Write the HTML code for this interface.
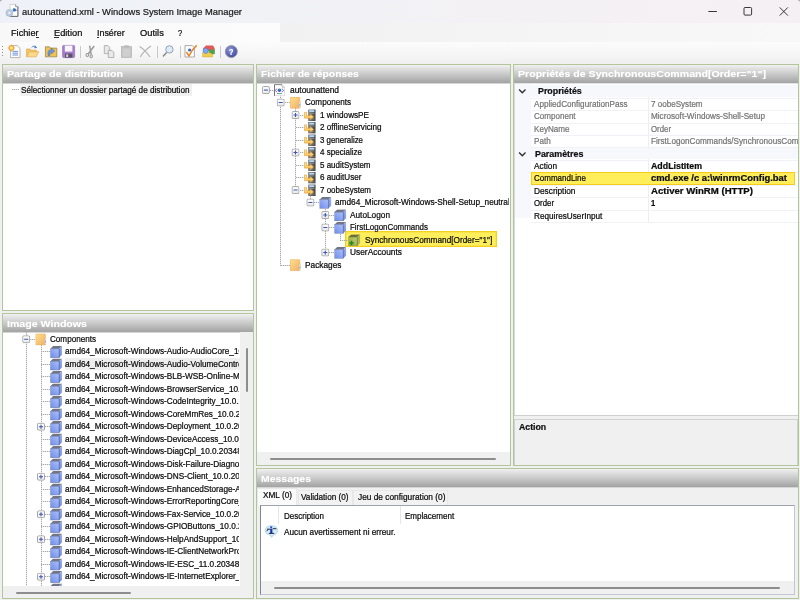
<!DOCTYPE html>
<html lang="fr"><head><meta charset="utf-8"><title>autounattend.xml - Windows System Image Manager</title>
<style>
html,body{margin:0;padding:0;}
body{width:800px;height:600px;overflow:hidden;background:#f0f0f0;position:relative;font-family:"Liberation Sans",sans-serif;}
#app{filter:blur(0.45px);position:absolute;left:0;top:0;width:800px;height:600px;overflow:hidden;}
#app div,#app span,#app svg{position:absolute;}
.t{white-space:pre;transform-origin:0 50%;display:block;-webkit-text-stroke:0.22px currentColor;}
.c{overflow:hidden;}
.b{font-weight:bold;}
</style></head><body><div id="app">

<svg width="0" height="0" style="left:0;top:0"><defs>
<linearGradient id="gcube" x1="0" y1="1" x2="1" y2="0"><stop offset="0" stop-color="#6f8deb"/><stop offset="1" stop-color="#abc0fa"/></linearGradient>
<linearGradient id="gcubeR" x1="0" y1="1" x2="1" y2="0"><stop offset="0" stop-color="#6d86d4"/><stop offset="1" stop-color="#a3b7ef"/></linearGradient>
<linearGradient id="gfold" x1="0" y1="0" x2="1" y2="1"><stop offset="0" stop-color="#fddf8c"/><stop offset="1" stop-color="#f1b163"/></linearGradient>
<linearGradient id="gsrv" x1="0" y1="0" x2="1" y2="0"><stop offset="0" stop-color="#858585"/><stop offset="1" stop-color="#444444"/></linearGradient>
<linearGradient id="garr" x1="0" y1="0" x2="0" y2="1"><stop offset="0" stop-color="#fee9a8"/><stop offset="1" stop-color="#f8bd4c"/></linearGradient>
<linearGradient id="gexp" x1="0" y1="0" x2="0" y2="1"><stop offset="0" stop-color="#ffffff"/><stop offset="1" stop-color="#e9e9e9"/></linearGradient>
<linearGradient id="ggreen" x1="0" y1="1" x2="1" y2="0"><stop offset="0" stop-color="#8fa53e"/><stop offset="1" stop-color="#c3cc74"/></linearGradient>
<radialGradient id="ghelp" cx="0.4" cy="0.35" r="0.7"><stop offset="0" stop-color="#8f9be0"/><stop offset="1" stop-color="#3b4597"/></radialGradient>
<symbol id="cube" viewBox="0 0 12 12">
<polygon points="0.2,2.9 2.9,0.2 12,0.2 8.8,2.9" fill="#737585"/>
<polygon points="8.8,2.9 12,0.2 12,8.8 8.8,11.8" fill="url(#gcubeR)"/>
<path d="M8.8,2.9 V11.8" stroke="#4f5e96" stroke-width="0.7"/>
<rect x="0.3" y="2.9" width="8.5" height="8.8" fill="url(#gcube)" stroke="#5b6a9e" stroke-width="0.5"/>
</symbol>
<symbol id="gcubeS" viewBox="0 0 12 12">
<polygon points="0.2,2.9 2.9,0.2 12,0.2 8.8,2.9" fill="#6c7040"/>
<polygon points="8.8,2.9 12,0.2 12,8.8 8.8,11.8" fill="#a9b75a"/>
<path d="M8.8,2.9 V11.8" stroke="#66722e" stroke-width="0.7"/>
<rect x="0.3" y="2.9" width="8.5" height="8.8" fill="url(#ggreen)" stroke="#6f7c34" stroke-width="0.5"/>
<path d="M1.0,8.8h4.4M3.2,6.6v4.4" stroke="#1f8a1f" stroke-width="1.5" fill="none"/>
</symbol>
<symbol id="folder" viewBox="0 0 11 12">
<rect x="0.3" y="0.4" width="9.6" height="11.2" rx="0.6" fill="url(#gfold)" stroke="#e9a964" stroke-width="0.6"/>
<path d="M9.2,5.6 l1.5,-1 v5.6 l-1.5,1z" fill="#fdfdfd" stroke="#c9a06a" stroke-width="0.4"/>
<path d="M9.5,7.2 l0.9,-0.5 v2.4 l-0.9,0.6z" fill="#7fa6e6"/>
</symbol>
<symbol id="pass" viewBox="0 0 12 12">
<rect x="4.2" y="0.2" width="7.500" height="11.600" fill="url(#gsrv)"/>
<rect x="5.4" y="1" width="5" height="1.900" fill="#b4d8f8"/>
<rect x="5.4" y="3.800" width="5" height="0.700" fill="#969696"/>
<rect x="5.4" y="9.400" width="5" height="0.700" fill="#8a8a8a"/>
<path d="M0.500,3.200 h2.200 v3.300 h3.700 v-1.700 l3.400,2.900 l-3.400,2.900 v-1.700 h-5.900z" fill="url(#garr)" stroke="#e09a26" stroke-width="0.6" stroke-linejoin="round"/>
</symbol>
<symbol id="xmldoc" viewBox="0 0 11 12">
<path d="M0.4,0.4 h7.6 l2.6,2.6 v8.6 h-10.2z" fill="#ffffff" stroke="#b9b9b9" stroke-width="0.5"/>
<path d="M0.4,11.6 v-11.2 h7.6" fill="none" stroke="#4a4a4a" stroke-width="0.8"/>
<path d="M8,0.4 v2.6 h2.6" fill="#f2f2f2" stroke="#8a8a8a" stroke-width="0.5"/>
<path d="M2.9,4.4 l-1.5,1.8 l1.5,1.8 M8,4.4 l1.5,1.8 l-1.5,1.8" fill="none" stroke="#5a58c0" stroke-width="0.9"/>
<circle cx="5.45" cy="6.1" r="1.7" fill="#3a4fd8"/>
<circle cx="5.5" cy="5.5" r="0.8" fill="#3cb060"/>
<rect x="3" y="9" width="5" height="0.8" fill="#4a9a8c"/>
</symbol>
<symbol id="minus" viewBox="0 0 8 8">
<rect x="0.5" y="0.5" width="7" height="7" rx="1.2" fill="url(#gexp)" stroke="#9b9b9b" stroke-width="0.9"/>
<path d="M2,4 h4" stroke="#3b58b2" stroke-width="1.1"/>
</symbol>
<symbol id="plus" viewBox="0 0 8 8">
<rect x="0.5" y="0.5" width="7" height="7" rx="1.2" fill="url(#gexp)" stroke="#9b9b9b" stroke-width="0.9"/>
<path d="M2,4 h4 M4,2 v4" stroke="#3b58b2" stroke-width="1.1"/>
</symbol>
</defs></svg>
<div style="left:0px;top:0px;width:800px;height:23px;background:linear-gradient(90deg,#eef2f8 0%,#f1f2f6 35%,#f4f1f4 70%,#f5f0f3 100%);"></div>
<div style="left:0px;top:23px;width:280px;height:19px;background:linear-gradient(90deg,#f8f8f8,#fcfcfc);"></div>
<div style="left:280px;top:23px;width:520px;height:19px;background:linear-gradient(90deg,#f1f1f1,#f8f8f8);"></div>
<div style="left:0px;top:42px;width:800px;height:21px;background:linear-gradient(#fcfcfc,#f7f7f7 50%,#f0f0f0);"></div>
<svg style="left:4px;top:3px" width="16" height="16" viewBox="4 3 16 16">
<path d="M10,4.400 h5.600 l2.300,2.300 v9.700 h-7.900z" fill="#ffffff" stroke="#b5b5b5" stroke-width="0.600"/>
<path d="M17.900,6.700 v9.700 h-7.900" fill="none" stroke="#5a5a5a" stroke-width="0.900"/>
<path d="M15.600,4.400 v2.300 h2.300" fill="#e8e8e8" stroke="#6a6a6a" stroke-width="0.600"/>
<circle cx="14.300" cy="9.900" r="1.700" fill="#2f55d0"/><circle cx="13.700" cy="9.300" r="0.900" fill="#35b05a"/>
<path d="M15.800,10.200 h1.400" stroke="#5a62c8" stroke-width="0.800"/>
<circle cx="9.400" cy="12.900" r="3.500" fill="#bccbdc" stroke="#9fb2c8" stroke-width="0.600"/><circle cx="9.400" cy="12.900" r="1.150" fill="#f1f4f8"/>
</svg>
<svg style="left:700px;top:0" width="100" height="23" viewBox="0 0 100 23">
<path d="M8.3,11.5 h8.6" stroke="#222" stroke-width="0.9"/>
<rect x="44" y="7.5" width="7.6" height="7.6" rx="1" fill="none" stroke="#222" stroke-width="0.9"/>
<path d="M79.7,7.4 l8.2,8.2 M87.9,7.4 l-8.2,8.2" stroke="#222" stroke-width="0.9"/>
</svg>
<div style="left:35.5px;top:37px;width:3px;height:1px;background:#333;"></div>
<div style="left:53.6px;top:37px;width:5px;height:1px;background:#333;"></div>
<div style="left:96.8px;top:37px;width:2px;height:1px;background:#333;"></div>
<div style="left:2px;top:46px;width:1px;height:1px;background:#8e8e8e;"></div>
<div style="left:2px;top:49px;width:1px;height:1px;background:#8e8e8e;"></div>
<div style="left:2px;top:52px;width:1px;height:1px;background:#8e8e8e;"></div>
<div style="left:2px;top:55px;width:1px;height:1px;background:#8e8e8e;"></div>
<div style="left:80px;top:46px;width:1px;height:12px;background:#c9c9c9;"></div>
<div style="left:157px;top:46px;width:1px;height:12px;background:#c9c9c9;"></div>
<div style="left:180px;top:46px;width:1px;height:12px;background:#c9c9c9;"></div>
<div style="left:220px;top:46px;width:1px;height:12px;background:#c9c9c9;"></div>
<svg style="left:0;top:42px" width="250" height="20" viewBox="0 42 250 20">
<!-- new -->
<path d="M10.6,45.6 h6.6 l2.8,2.8 v9.2 h-9.4z" fill="#fdfdfd" stroke="#9a9a9a" stroke-width="0.7"/>
<path d="M12.5,51.4h5.6M12.5,53.2h5.6M12.5,55h5.6" stroke="#5d84d6" stroke-width="0.9"/>
<circle cx="11.4" cy="48" r="2.5" fill="#fbc64c" stroke="#ef9a2a" stroke-width="0.8"/>
<path d="M11.4,44.4v7.2M7.8,48h7.2M8.9,45.5l5,5M13.9,45.5l-5,5" stroke="#f3a030" stroke-width="0.6"/>
<circle cx="11.4" cy="48" r="1.4" fill="#fde9a0"/>
<!-- open -->
<path d="M26.6,56.6 v-7.6 h3.4 l1,1.2 h5.4 v1.6" fill="#f6c766" stroke="#d89a3c" stroke-width="0.6"/>
<path d="M26.6,56.8 l2.6,-5 h9.6 l-2.6,5z" fill="#fbd98a" stroke="#dba041" stroke-width="0.6"/>
<path d="M31.6,47.6 c1.4,-2 3.6,-2 4.8,-0.2" fill="none" stroke="#4a78c8" stroke-width="0.9"/>
<path d="M35.2,45.6 l1.8,2.4 l-2.8,0.2z" fill="#4a78c8"/>
<!-- folder arrow -->
<path d="M45.4,56.8 v-10 h4 l1,1.3 h6.4 v8.7z" fill="#f4c34f" stroke="#8a7a52" stroke-width="0.7"/>
<path d="M48,55.4 v-3 c0,-1.8 1.4,-2.6 3.2,-2.6 v-1.6 l3.6,2.8 l-3.6,2.8 v-1.6 c-0.8,0 -1.2,0.2 -1.2,1 v2.2z" fill="#6f98de" stroke="#3f67b1" stroke-width="0.5"/>
<!-- save -->
<rect x="62.6" y="45.4" width="12" height="12.2" rx="1" fill="#a77ccb" stroke="#8a5fb4" stroke-width="0.6"/>
<rect x="64.8" y="45.6" width="7.6" height="6" fill="#f7f4fb"/>
<rect x="65" y="53.6" width="7.4" height="4" fill="#5a5361"/>
<rect x="66.2" y="54.4" width="2" height="2.6" fill="#d8d2e0"/>
<!-- cut (disabled) -->
<path d="M89.600,45.600 l1.600,9 M94.200,46 l-6.200,8.200" stroke="#9a9a9a" stroke-width="1.500" fill="none"/>
<ellipse cx="87.300" cy="55" rx="1.300" ry="1.500" fill="none" stroke="#9a9a9a" stroke-width="1.100"/>
<ellipse cx="91.200" cy="56.200" rx="1.200" ry="1.500" fill="none" stroke="#9a9a9a" stroke-width="1.100"/>
<!-- copy -->
<path d="M104.300,45.600 h3.600 l1.800,1.800 v6.200 h-5.400z" fill="#e9e9e9" stroke="#a4a4a4" stroke-width="0.800"/>
<path d="M108.300,50.400 h3.700 l1.800,1.800 v5.300 h-5.500z" fill="#e9e9e9" stroke="#a4a4a4" stroke-width="0.800"/>
<!-- paste -->
<rect x="121.4" y="46.6" width="10.2" height="11" fill="#c4c4c4" stroke="#b0b0b0" stroke-width="0.6"/>
<rect x="124.2" y="45.4" width="4.6" height="2" fill="#b7b7b7"/>
<rect x="122.8" y="48.6" width="7.4" height="8" fill="#cfcfcf"/>
<!-- delete -->
<path d="M139.6,46.4 c4,2.4 7.4,6 10.4,10.6 M151,46 c-4.4,3 -8.4,6.6 -10.6,11" stroke="#b4b4b4" stroke-width="1.2" fill="none"/>
<!-- find -->
<circle cx="169.4" cy="49.4" r="3.7" fill="#dcebfa" stroke="#8d99ab" stroke-width="0.9"/>
<path d="M166.6,52.4 l-3.6,4.2" stroke="#8a8a8a" stroke-width="1.5"/>
<!-- validate -->
<path d="M185,45.6 h7.4 l2,2 v9.4 h-9.4z" fill="#fdfdfd" stroke="#8b8b8b" stroke-width="0.7"/>
<circle cx="189.6" cy="50" r="1.6" fill="#3a66c8"/>
<path d="M186.4,52 l2.6,4 c2,-4.4 4.4,-7.6 7.6,-10.6" fill="none" stroke="#e8862c" stroke-width="1.5"/>
<!-- config set -->
<path d="M203,48.6 l3,-3 h7 l1.6,2.4 v3 h-11.6z" fill="#e05a5a"/>
<rect x="208.6" y="49.6" width="6.2" height="4.6" fill="#4fa24a"/>
<path d="M202.6,52.6 h7 l3,2 v2.4 h-10z" fill="#f2cd4a" stroke="#b89c3a" stroke-width="0.4"/>
<circle cx="205.6" cy="50.8" r="2.6" fill="#7eaaf0" stroke="#4d74c8" stroke-width="0.5"/>
<!-- help -->
<circle cx="231.3" cy="51.6" r="6" fill="url(#ghelp)" stroke="#9a9aa6" stroke-width="1"/>
</svg>
<div style="left:2px;top:64px;width:252px;height:247px;box-sizing:border-box;border:1px solid #b3c59b;background:#ffffff;"></div>
<div style="left:3px;top:65px;width:250px;height:18px;background:linear-gradient(#f1f1f1 0%,#e2e2e2 18%,#c6c6c6 55%,#a3a3a3 100%);"></div>
<div style="left:3px;top:83px;width:250px;height:1px;background:#d6d6d6;"></div>
<div style="left:2px;top:313px;width:252px;height:286px;box-sizing:border-box;border:1px solid #b3c59b;background:#ffffff;"></div>
<div style="left:3px;top:314px;width:250px;height:18px;background:linear-gradient(#f1f1f1 0%,#e2e2e2 18%,#c6c6c6 55%,#a3a3a3 100%);"></div>
<div style="left:3px;top:332px;width:250px;height:1px;background:#d6d6d6;"></div>
<div style="left:256px;top:64px;width:255px;height:402px;box-sizing:border-box;border:1px solid #b3c59b;background:#ffffff;"></div>
<div style="left:257px;top:65px;width:253px;height:18px;background:linear-gradient(#f1f1f1 0%,#e2e2e2 18%,#c6c6c6 55%,#a3a3a3 100%);"></div>
<div style="left:257px;top:83px;width:253px;height:1px;background:#d6d6d6;"></div>
<div style="left:513px;top:64px;width:286px;height:402px;box-sizing:border-box;border:1px solid #b3c59b;background:#ffffff;"></div>
<div style="left:514px;top:65px;width:284px;height:18px;background:linear-gradient(#f1f1f1 0%,#e2e2e2 18%,#c6c6c6 55%,#a3a3a3 100%);"></div>
<div style="left:514px;top:83px;width:284px;height:1px;background:#d6d6d6;"></div>
<div style="left:256px;top:468px;width:543px;height:131px;box-sizing:border-box;border:1px solid #b3c59b;background:#f0f0f0;"></div>
<div style="left:257px;top:469px;width:541px;height:18px;background:linear-gradient(#f1f1f1 0%,#e2e2e2 18%,#c6c6c6 55%,#a3a3a3 100%);"></div>
<div style="left:257px;top:487px;width:541px;height:1px;background:#d6d6d6;"></div>
<div style="left:12px;top:89px;width:7px;height:1px;background:repeating-linear-gradient(90deg,#a9a9a9 0 1px,rgba(169,169,169,.3) 1px 2px);"></div>
<div style="left:20px;top:84px;width:172px;height:12px;background:#f0f0f0;"></div>
<div style="left:280px;top:95px;width:1px;height:171px;background:repeating-linear-gradient(180deg,#a9a9a9 0 1px,rgba(169,169,169,.3) 1px 2px);"></div>
<div style="left:295px;top:108px;width:1px;height:82px;background:repeating-linear-gradient(180deg,#a9a9a9 0 1px,rgba(169,169,169,.3) 1px 2px);"></div>
<div style="left:310px;top:196px;width:1px;height:7px;background:repeating-linear-gradient(180deg,#a9a9a9 0 1px,rgba(169,169,169,.3) 1px 2px);"></div>
<div style="left:325px;top:209px;width:1px;height:44px;background:repeating-linear-gradient(180deg,#a9a9a9 0 1px,rgba(169,169,169,.3) 1px 2px);"></div>
<div style="left:340px;top:234px;width:1px;height:6px;background:repeating-linear-gradient(180deg,#a9a9a9 0 1px,rgba(169,169,169,.3) 1px 2px);"></div>
<div style="left:345px;top:231px;width:152px;height:16px;box-sizing:border-box;background:#fdee5c;border:1px solid #f4d01e;box-shadow:inset 0 0 0 0.5px #f7dc3c;"></div>
<div style="left:270px;top:90px;width:4px;height:1px;background:repeating-linear-gradient(90deg,#a9a9a9 0 1px,rgba(169,169,169,.3) 1px 2px);"></div>
<div style="left:285px;top:102px;width:5px;height:1px;background:repeating-linear-gradient(90deg,#a9a9a9 0 1px,rgba(169,169,169,.3) 1px 2px);"></div>
<div style="left:300px;top:115px;width:4px;height:1px;background:repeating-linear-gradient(90deg,#a9a9a9 0 1px,rgba(169,169,169,.3) 1px 2px);"></div>
<div style="left:296px;top:127px;width:8px;height:1px;background:repeating-linear-gradient(90deg,#a9a9a9 0 1px,rgba(169,169,169,.3) 1px 2px);"></div>
<div style="left:296px;top:140px;width:8px;height:1px;background:repeating-linear-gradient(90deg,#a9a9a9 0 1px,rgba(169,169,169,.3) 1px 2px);"></div>
<div style="left:300px;top:152px;width:4px;height:1px;background:repeating-linear-gradient(90deg,#a9a9a9 0 1px,rgba(169,169,169,.3) 1px 2px);"></div>
<div style="left:296px;top:165px;width:8px;height:1px;background:repeating-linear-gradient(90deg,#a9a9a9 0 1px,rgba(169,169,169,.3) 1px 2px);"></div>
<div style="left:296px;top:177px;width:8px;height:1px;background:repeating-linear-gradient(90deg,#a9a9a9 0 1px,rgba(169,169,169,.3) 1px 2px);"></div>
<div style="left:300px;top:190px;width:4px;height:1px;background:repeating-linear-gradient(90deg,#a9a9a9 0 1px,rgba(169,169,169,.3) 1px 2px);"></div>
<div style="left:314px;top:202px;width:5px;height:1px;background:repeating-linear-gradient(90deg,#a9a9a9 0 1px,rgba(169,169,169,.3) 1px 2px);"></div>
<div style="left:329px;top:215px;width:5px;height:1px;background:repeating-linear-gradient(90deg,#a9a9a9 0 1px,rgba(169,169,169,.3) 1px 2px);"></div>
<div style="left:329px;top:227px;width:5px;height:1px;background:repeating-linear-gradient(90deg,#a9a9a9 0 1px,rgba(169,169,169,.3) 1px 2px);"></div>
<div style="left:340px;top:240px;width:8px;height:1px;background:repeating-linear-gradient(90deg,#a9a9a9 0 1px,rgba(169,169,169,.3) 1px 2px);"></div>
<div style="left:329px;top:252px;width:5px;height:1px;background:repeating-linear-gradient(90deg,#a9a9a9 0 1px,rgba(169,169,169,.3) 1px 2px);"></div>
<div style="left:281px;top:265px;width:9px;height:1px;background:repeating-linear-gradient(90deg,#a9a9a9 0 1px,rgba(169,169,169,.3) 1px 2px);"></div>
<div style="left:257px;top:452px;width:253px;height:13px;background:#f0f0f0;"></div>
<div style="left:270px;top:458px;width:226px;height:2px;background:#8d8d8d;border-radius:1px;"></div>
<div style="left:240px;top:332px;width:13px;height:266px;background:#f0f0f0;"></div>
<div style="left:3px;top:586px;width:250px;height:12px;background:#f0f0f0;"></div>
<div style="left:246px;top:348px;width:2px;height:44px;background:#8d8d8d;border-radius:1px;"></div>
<div style="left:16px;top:592px;width:115px;height:2px;background:#8d8d8d;border-radius:1px;"></div>
<div style="left:26px;top:332px;width:1px;height:254px;background:repeating-linear-gradient(180deg,#a9a9a9 0 1px,rgba(169,169,169,.3) 1px 2px);"></div>
<div style="left:41px;top:345px;width:1px;height:241px;background:repeating-linear-gradient(180deg,#a9a9a9 0 1px,rgba(169,169,169,.3) 1px 2px);"></div>
<div style="left:65px;top:358px;width:175px;height:12px;background:#eeeeee;"></div>
<div style="left:30px;top:339px;width:5px;height:1px;background:repeating-linear-gradient(90deg,#a9a9a9 0 1px,rgba(169,169,169,.3) 1px 2px);"></div>
<div style="left:41px;top:351px;width:9px;height:1px;background:repeating-linear-gradient(90deg,#a9a9a9 0 1px,rgba(169,169,169,.3) 1px 2px);"></div>
<div style="left:41px;top:364px;width:9px;height:1px;background:repeating-linear-gradient(90deg,#a9a9a9 0 1px,rgba(169,169,169,.3) 1px 2px);"></div>
<div style="left:41px;top:376px;width:9px;height:1px;background:repeating-linear-gradient(90deg,#a9a9a9 0 1px,rgba(169,169,169,.3) 1px 2px);"></div>
<div style="left:41px;top:389px;width:9px;height:1px;background:repeating-linear-gradient(90deg,#a9a9a9 0 1px,rgba(169,169,169,.3) 1px 2px);"></div>
<div style="left:41px;top:401px;width:9px;height:1px;background:repeating-linear-gradient(90deg,#a9a9a9 0 1px,rgba(169,169,169,.3) 1px 2px);"></div>
<div style="left:41px;top:414px;width:9px;height:1px;background:repeating-linear-gradient(90deg,#a9a9a9 0 1px,rgba(169,169,169,.3) 1px 2px);"></div>
<div style="left:45px;top:426px;width:5px;height:1px;background:repeating-linear-gradient(90deg,#a9a9a9 0 1px,rgba(169,169,169,.3) 1px 2px);"></div>
<div style="left:41px;top:439px;width:9px;height:1px;background:repeating-linear-gradient(90deg,#a9a9a9 0 1px,rgba(169,169,169,.3) 1px 2px);"></div>
<div style="left:41px;top:451px;width:9px;height:1px;background:repeating-linear-gradient(90deg,#a9a9a9 0 1px,rgba(169,169,169,.3) 1px 2px);"></div>
<div style="left:41px;top:464px;width:9px;height:1px;background:repeating-linear-gradient(90deg,#a9a9a9 0 1px,rgba(169,169,169,.3) 1px 2px);"></div>
<div style="left:45px;top:476px;width:5px;height:1px;background:repeating-linear-gradient(90deg,#a9a9a9 0 1px,rgba(169,169,169,.3) 1px 2px);"></div>
<div style="left:41px;top:489px;width:9px;height:1px;background:repeating-linear-gradient(90deg,#a9a9a9 0 1px,rgba(169,169,169,.3) 1px 2px);"></div>
<div style="left:41px;top:501px;width:9px;height:1px;background:repeating-linear-gradient(90deg,#a9a9a9 0 1px,rgba(169,169,169,.3) 1px 2px);"></div>
<div style="left:45px;top:514px;width:5px;height:1px;background:repeating-linear-gradient(90deg,#a9a9a9 0 1px,rgba(169,169,169,.3) 1px 2px);"></div>
<div style="left:41px;top:526px;width:9px;height:1px;background:repeating-linear-gradient(90deg,#a9a9a9 0 1px,rgba(169,169,169,.3) 1px 2px);"></div>
<div style="left:45px;top:539px;width:5px;height:1px;background:repeating-linear-gradient(90deg,#a9a9a9 0 1px,rgba(169,169,169,.3) 1px 2px);"></div>
<div style="left:41px;top:551px;width:9px;height:1px;background:repeating-linear-gradient(90deg,#a9a9a9 0 1px,rgba(169,169,169,.3) 1px 2px);"></div>
<div style="left:41px;top:564px;width:9px;height:1px;background:repeating-linear-gradient(90deg,#a9a9a9 0 1px,rgba(169,169,169,.3) 1px 2px);"></div>
<div style="left:45px;top:576px;width:5px;height:1px;background:repeating-linear-gradient(90deg,#a9a9a9 0 1px,rgba(169,169,169,.3) 1px 2px);"></div>
<div style="left:41px;top:589px;width:9px;height:1px;background:repeating-linear-gradient(90deg,#a9a9a9 0 1px,rgba(169,169,169,.3) 1px 2px);"></div>
<div style="left:514px;top:83px;width:284px;height:333px;background:#ffffff;"></div>
<div style="left:514px;top:83px;width:17px;height:135.0px;background:#f6f8fc;"></div>
<div style="left:514px;top:83px;width:1px;height:333px;background:#dadada;"></div>
<div style="left:514px;top:83px;width:284px;height:1px;background:#e3e3e3;"></div>
<div style="left:648px;top:97px;width:1px;height:125px;background:#eceef4;"></div>
<div style="left:515px;top:85px;width:283px;height:12px;background:#f6f8fc;"></div>
<div style="left:515px;top:147px;width:283px;height:12px;background:#f6f8fc;"></div>
<div style="left:531px;top:98px;width:267px;height:1px;background:#f1f2f7;"></div>
<div style="left:531px;top:110px;width:267px;height:1px;background:#f1f2f7;"></div>
<div style="left:531px;top:123px;width:267px;height:1px;background:#f1f2f7;"></div>
<div style="left:531px;top:135px;width:267px;height:1px;background:#f1f2f7;"></div>
<div style="left:531px;top:147px;width:267px;height:1px;background:#f1f2f7;"></div>
<div style="left:531px;top:160px;width:267px;height:1px;background:#f1f2f7;"></div>
<div style="left:531px;top:172px;width:267px;height:1px;background:#f1f2f7;"></div>
<div style="left:531px;top:185px;width:267px;height:1px;background:#f1f2f7;"></div>
<div style="left:531px;top:197px;width:267px;height:1px;background:#f1f2f7;"></div>
<div style="left:531px;top:210px;width:267px;height:1px;background:#f1f2f7;"></div>
<div style="left:531px;top:222px;width:267px;height:1px;background:#f1f2f7;"></div>
<svg style="left:518px;top:88.1px" width="9" height="7" viewBox="0 0 9 7"><path d="M1.1,1.6 L4.3,4.8 L7.5,1.6" fill="none" stroke="#2e2e2e" stroke-width="1.35"/></svg>
<svg style="left:518px;top:150.5px" width="9" height="7" viewBox="0 0 9 7"><path d="M1.1,1.6 L4.3,4.8 L7.5,1.6" fill="none" stroke="#2e2e2e" stroke-width="1.35"/></svg>
<div style="left:531px;top:172px;width:264px;height:13px;box-sizing:border-box;background:#ffee5a;border:1px solid #f6cc1c;"></div>
<div style="left:514px;top:415px;width:284px;height:1px;background:#cfcfcf;"></div>
<div style="left:514px;top:416px;width:284px;height:3px;background:#f0f0f0;"></div>
<div style="left:514px;top:419px;width:284px;height:46px;box-sizing:border-box;background:#f0f0f0;border:1px solid #d0d2cd;border-bottom:none;"></div>
<div style="left:257px;top:488px;width:40px;height:18px;box-sizing:border-box;background:#fafafa;border:1px solid #e9e9e9;border-bottom:none;"></div>
<div style="left:298px;top:490px;width:55px;height:15px;box-sizing:border-box;background:#f2f2f2;border:1px solid #e8e8e8;border-bottom:none;"></div>
<div style="left:353px;top:490px;width:95px;height:15px;box-sizing:border-box;background:#f2f2f2;border:1px solid #e8e8e8;border-bottom:none;"></div>
<div style="left:260px;top:505px;width:535px;height:90px;box-sizing:border-box;background:#ffffff;border:1px solid #c3c7cf;border-left-color:#7f8592;border-top-color:#9ea3ad;"></div>
<div style="left:261px;top:581px;width:533px;height:13px;background:#f0f0f0;"></div>
<div style="left:274px;top:587px;width:506px;height:2px;background:#8d8d8d;border-radius:1px;"></div>
<div style="left:278px;top:506px;width:1px;height:18px;background:#e6e6e6;"></div>
<div style="left:400px;top:506px;width:1px;height:18px;background:#e6e6e6;"></div>
<svg style="left:264px;top:525px" width="15" height="14" viewBox="264 525 15 14">
<path d="M271.4,525.800 c3.700,0 6.300,2 6.300,4.700 c0,2.300 -1.900,4 -4.400,4.500 l-1.700,2.600 l-1.300,-2.500 c-2.900,-0.400 -5.100,-2.200 -5.100,-4.600 c0,-2.700 2.500,-4.700 6.200,-4.700z" fill="#d4ebf8" stroke="#9fcdec" stroke-width="0.7"/>
<rect x="270.2" y="528.700" width="2.200" height="4.600" fill="#1533b8"/>
<circle cx="271.2" cy="527.300" r="1.100" fill="#2846c8"/>
<path d="M267,529.200 h3.200 M266.600,531.200 l1.600,-1.800 M272.800,528.700 h3.600 M268.800,533.400 h5.400" stroke="#1a1a1a" stroke-width="0.9" fill="none"/>
</svg>
<svg style="left:0;top:0" width="4" height="4" viewBox="0 0 4 4"><path d="M0,0 h3.2 a3.2,3.2 0 0 0 -3.2,3.200z" fill="#6c6c6c" opacity=".55"/></svg>
<svg style="left:796px;top:0" width="4" height="4" viewBox="0 0 4 4"><path d="M4,0 h-3.200 a3.2,3.200 0 0 1 3.200,3.200z" fill="#6c6c6c" opacity=".55"/></svg>
<svg style="left:0;top:0" width="800" height="600" viewBox="0 0 800 600"><use href="#minus" x="261.90" y="86.05" width="8" height="8"/><use href="#xmldoc" x="274.00" y="84.20" width="11" height="12"/><use href="#minus" x="276.70" y="98.55" width="8" height="8"/><use href="#folder" x="289.90" y="96.70" width="11" height="12"/><use href="#plus" x="291.50" y="111.05" width="8" height="8"/><use href="#pass" x="303.90" y="109.20" width="12" height="12"/><use href="#pass" x="303.90" y="121.70" width="12" height="12"/><use href="#pass" x="303.90" y="134.20" width="12" height="12"/><use href="#plus" x="291.50" y="148.55" width="8" height="8"/><use href="#pass" x="303.90" y="146.70" width="12" height="12"/><use href="#pass" x="303.90" y="159.20" width="12" height="12"/><use href="#pass" x="303.90" y="171.70" width="12" height="12"/><use href="#minus" x="291.50" y="186.05" width="8" height="8"/><use href="#pass" x="303.90" y="184.20" width="12" height="12"/><use href="#minus" x="306.40" y="198.55" width="8" height="8"/><use href="#cube" x="319.40" y="196.70" width="12" height="12"/><use href="#plus" x="321.30" y="211.05" width="8" height="8"/><use href="#cube" x="334.30" y="209.20" width="12" height="12"/><use href="#minus" x="321.30" y="223.55" width="8" height="8"/><use href="#cube" x="334.30" y="221.70" width="12" height="12"/><use href="#gcubeS" x="348.30" y="234.20" width="12" height="12"/><use href="#plus" x="321.30" y="248.55" width="8" height="8"/><use href="#cube" x="334.30" y="246.70" width="12" height="12"/><use href="#folder" x="289.90" y="259.20" width="11" height="12"/><use href="#minus" x="22.20" y="335.25" width="8" height="8"/><use href="#folder" x="35.40" y="333.40" width="11" height="12"/><use href="#cube" x="50.20" y="345.90" width="12" height="12"/><use href="#cube" x="50.20" y="358.40" width="12" height="12"/><use href="#cube" x="50.20" y="370.90" width="12" height="12"/><use href="#cube" x="50.20" y="383.40" width="12" height="12"/><use href="#cube" x="50.20" y="395.90" width="12" height="12"/><use href="#cube" x="50.20" y="408.40" width="12" height="12"/><use href="#plus" x="37.00" y="422.75" width="8" height="8"/><use href="#cube" x="50.20" y="420.90" width="12" height="12"/><use href="#cube" x="50.20" y="433.40" width="12" height="12"/><use href="#cube" x="50.20" y="445.90" width="12" height="12"/><use href="#cube" x="50.20" y="458.40" width="12" height="12"/><use href="#plus" x="37.00" y="472.75" width="8" height="8"/><use href="#cube" x="50.20" y="470.90" width="12" height="12"/><use href="#cube" x="50.20" y="483.40" width="12" height="12"/><use href="#cube" x="50.20" y="495.90" width="12" height="12"/><use href="#plus" x="37.00" y="510.25" width="8" height="8"/><use href="#cube" x="50.20" y="508.40" width="12" height="12"/><use href="#cube" x="50.20" y="520.90" width="12" height="12"/><use href="#plus" x="37.00" y="535.25" width="8" height="8"/><use href="#cube" x="50.20" y="533.40" width="12" height="12"/><use href="#cube" x="50.20" y="545.90" width="12" height="12"/><use href="#cube" x="50.20" y="558.40" width="12" height="12"/><use href="#plus" x="37.00" y="572.75" width="8" height="8"/><use href="#cube" x="50.20" y="570.90" width="12" height="12"/><use href="#cube" x="50.20" y="583.40" width="12" height="12"/></svg>
<span id="t0" class="t" style="left:22px;top:5.00px;font-size:9.6px;line-height:14px;color:#1a1a1a;transform:scaleX(0.9753);">autounattend.xml - Windows System Image Manager</span>
<span id="t1" class="t" style="left:10.7px;top:26.00px;font-size:9.4px;line-height:14px;color:#0a0a0a;transform:scaleX(0.9808);">Fichier</span>
<span id="t2" class="t" style="left:53.6px;top:26.00px;font-size:9.4px;line-height:14px;color:#0a0a0a;transform:scaleX(0.9870);">Edition</span>
<span id="t3" class="t" style="left:96.8px;top:26.00px;font-size:9.4px;line-height:14px;color:#0a0a0a;transform:scaleX(0.9490);">Insérer</span>
<span id="t4" class="t" style="left:139.7px;top:26.00px;font-size:9.4px;line-height:14px;color:#0a0a0a;transform:scaleX(0.9930);">Outils</span>
<span id="t5" class="t" style="left:178px;top:26.00px;font-size:9.4px;line-height:14px;color:#0a0a0a;transform:scaleX(0.8048);">?</span>
<span id="t6" class="t b" style="left:229.2px;top:46.00px;font-size:9.5px;line-height:12px;color:#ffffff;transform:scaleX(0.7570);">?</span>
<span id="t7" class="t b" style="left:7.3px;top:67.00px;font-size:9.6px;line-height:14px;color:#ffffff;transform:scaleX(1.1102);-webkit-text-stroke:0;text-shadow:0 0 1px rgba(255,255,255,.5);">Partage de distribution</span>
<span id="t8" class="t b" style="left:7.3px;top:317.00px;font-size:9.6px;line-height:14px;color:#ffffff;transform:scaleX(1.1046);-webkit-text-stroke:0;text-shadow:0 0 1px rgba(255,255,255,.5);">Image Windows</span>
<span id="t9" class="t b" style="left:261.3px;top:67.00px;font-size:9.6px;line-height:14px;color:#ffffff;transform:scaleX(1.0779);-webkit-text-stroke:0;text-shadow:0 0 1px rgba(255,255,255,.5);">Fichier de réponses</span>
<span id="t10" class="t b" style="left:518.3px;top:67.00px;font-size:9.6px;line-height:14px;color:#ffffff;transform:scaleX(1.1034);-webkit-text-stroke:0;text-shadow:0 0 1px rgba(255,255,255,.5);">Propriétés de SynchronousCommand[Order="1"]</span>
<span id="t11" class="t b" style="left:261.3px;top:472.00px;font-size:9.6px;line-height:14px;color:#ffffff;transform:scaleX(1.0899);-webkit-text-stroke:0;text-shadow:0 0 1px rgba(255,255,255,.5);">Messages</span>
<span id="t12" class="t" style="left:21.3px;top:84.00px;font-size:8.5px;line-height:12px;color:#0a0a0a;transform:scaleX(0.9611);">Sélectionner un dossier partagé de distribution</span>
<span id="t13" class="t" style="left:289.9px;top:84.00px;font-size:8.5px;line-height:12px;color:#0a0a0a;transform:scaleX(0.9871);">autounattend</span>
<span id="t14" class="t" style="left:304.5px;top:96.00px;font-size:8.5px;line-height:12px;color:#0a0a0a;transform:scaleX(0.9543);">Components</span>
<span id="t15" class="t" style="left:319.9px;top:109.00px;font-size:8.5px;line-height:12px;color:#0a0a0a;transform:scaleX(0.9602);">1 windowsPE</span>
<span id="t16" class="t" style="left:319.9px;top:121.00px;font-size:8.5px;line-height:12px;color:#0a0a0a;transform:scaleX(0.9539);">2 offlineServicing</span>
<span id="t17" class="t" style="left:319.9px;top:134.00px;font-size:8.5px;line-height:12px;color:#0a0a0a;transform:scaleX(0.9285);">3 generalize</span>
<span id="t18" class="t" style="left:319.9px;top:146.00px;font-size:8.5px;line-height:12px;color:#0a0a0a;transform:scaleX(0.9455);">4 specialize</span>
<span id="t19" class="t" style="left:319.9px;top:159.00px;font-size:8.5px;line-height:12px;color:#0a0a0a;transform:scaleX(0.9374);">5 auditSystem</span>
<span id="t20" class="t" style="left:319.9px;top:171.00px;font-size:8.5px;line-height:12px;color:#0a0a0a;transform:scaleX(0.9524);">6 auditUser</span>
<span id="t21" class="t" style="left:319.9px;top:184.00px;font-size:8.5px;line-height:12px;color:#0a0a0a;transform:scaleX(0.9385);">7 oobeSystem</span>
<div class="c" style="left:335.1px;top:196.00px;width:173.6px;height:12px;"><span id="t22" class="t" style="left:0;top:0;font-size:8.5px;line-height:12px;color:#0a0a0a;transform:scaleX(0.9711);">amd64_Microsoft-Windows-Shell-Setup_neutral</span></div>
<span id="t23" class="t" style="left:349.5px;top:209.00px;font-size:8.5px;line-height:12px;color:#0a0a0a;transform:scaleX(0.9726);">AutoLogon</span>
<span id="t24" class="t" style="left:349.5px;top:221.00px;font-size:8.5px;line-height:12px;color:#0a0a0a;transform:scaleX(0.9327);">FirstLogonCommands</span>
<span id="t25" class="t" style="left:364.5px;top:234.00px;font-size:8.5px;line-height:12px;color:#0a0a0a;transform:scaleX(0.9710);">SynchronousCommand[Order="1"]</span>
<span id="t26" class="t" style="left:349.5px;top:246.00px;font-size:8.5px;line-height:12px;color:#0a0a0a;transform:scaleX(0.9826);">UserAccounts</span>
<span id="t27" class="t" style="left:305.1px;top:259.00px;font-size:8.5px;line-height:12px;color:#0a0a0a;transform:scaleX(0.9774);">Packages</span>
<span id="t28" class="t" style="left:50.1px;top:333.00px;font-size:8.5px;line-height:12px;color:#0a0a0a;transform:scaleX(0.9543);">Components</span>
<div class="c" style="left:65.1px;top:345.00px;width:174.4px;height:12px;"><span id="t29" class="t" style="left:0;top:0;font-size:8.5px;line-height:12px;color:#0a0a0a;transform:scaleX(0.9664);">amd64_Microsoft-Windows-Audio-AudioCore_10.0.20348.1</span></div>
<div class="c" style="left:65.1px;top:358.00px;width:174.4px;height:12px;"><span id="t30" class="t" style="left:0;top:0;font-size:8.5px;line-height:12px;color:#0a0a0a;transform:scaleX(0.9664);">amd64_Microsoft-Windows-Audio-VolumeControl_10.0.20348.1</span></div>
<div class="c" style="left:65.1px;top:370.00px;width:174.4px;height:12px;"><span id="t31" class="t" style="left:0;top:0;font-size:8.5px;line-height:12px;color:#0a0a0a;transform:scaleX(0.9664);">amd64_Microsoft-Windows-BLB-WSB-Online-Main_10.0.20348.1</span></div>
<div class="c" style="left:65.1px;top:383.00px;width:174.4px;height:12px;"><span id="t32" class="t" style="left:0;top:0;font-size:8.5px;line-height:12px;color:#0a0a0a;transform:scaleX(0.9664);">amd64_Microsoft-Windows-BrowserService_10.0.20348.1</span></div>
<div class="c" style="left:65.1px;top:395.00px;width:174.4px;height:12px;"><span id="t33" class="t" style="left:0;top:0;font-size:8.5px;line-height:12px;color:#0a0a0a;transform:scaleX(0.9664);">amd64_Microsoft-Windows-CodeIntegrity_10.0.20348.1</span></div>
<div class="c" style="left:65.1px;top:408.00px;width:174.4px;height:12px;"><span id="t34" class="t" style="left:0;top:0;font-size:8.5px;line-height:12px;color:#0a0a0a;transform:scaleX(0.9664);">amd64_Microsoft-Windows-CoreMmRes_10.0.20348.1</span></div>
<div class="c" style="left:65.1px;top:420.00px;width:174.4px;height:12px;"><span id="t35" class="t" style="left:0;top:0;font-size:8.5px;line-height:12px;color:#0a0a0a;transform:scaleX(0.9664);">amd64_Microsoft-Windows-Deployment_10.0.20348.1</span></div>
<div class="c" style="left:65.1px;top:433.00px;width:174.4px;height:12px;"><span id="t36" class="t" style="left:0;top:0;font-size:8.5px;line-height:12px;color:#0a0a0a;transform:scaleX(0.9664);">amd64_Microsoft-Windows-DeviceAccess_10.0.20348.1</span></div>
<div class="c" style="left:65.1px;top:445.00px;width:174.4px;height:12px;"><span id="t37" class="t" style="left:0;top:0;font-size:8.5px;line-height:12px;color:#0a0a0a;transform:scaleX(0.9664);">amd64_Microsoft-Windows-DiagCpl_10.0.20348.1</span></div>
<div class="c" style="left:65.1px;top:458.00px;width:174.4px;height:12px;"><span id="t38" class="t" style="left:0;top:0;font-size:8.5px;line-height:12px;color:#0a0a0a;transform:scaleX(0.9664);">amd64_Microsoft-Windows-Disk-Failure-Diagnostic_10.0.20348.1</span></div>
<div class="c" style="left:65.1px;top:470.00px;width:174.4px;height:12px;"><span id="t39" class="t" style="left:0;top:0;font-size:8.5px;line-height:12px;color:#0a0a0a;transform:scaleX(0.9664);">amd64_Microsoft-Windows-DNS-Client_10.0.20348.1</span></div>
<div class="c" style="left:65.1px;top:483.00px;width:174.4px;height:12px;"><span id="t40" class="t" style="left:0;top:0;font-size:8.5px;line-height:12px;color:#0a0a0a;transform:scaleX(0.9664);">amd64_Microsoft-Windows-EnhancedStorage-Adm_10.0.20348.1</span></div>
<div class="c" style="left:65.1px;top:495.00px;width:174.4px;height:12px;"><span id="t41" class="t" style="left:0;top:0;font-size:8.5px;line-height:12px;color:#0a0a0a;transform:scaleX(0.9664);">amd64_Microsoft-Windows-ErrorReportingCore_10.0.20348.1</span></div>
<div class="c" style="left:65.1px;top:508.00px;width:174.4px;height:12px;"><span id="t42" class="t" style="left:0;top:0;font-size:8.5px;line-height:12px;color:#0a0a0a;transform:scaleX(0.9664);">amd64_Microsoft-Windows-Fax-Service_10.0.20348.1</span></div>
<div class="c" style="left:65.1px;top:520.00px;width:174.4px;height:12px;"><span id="t43" class="t" style="left:0;top:0;font-size:8.5px;line-height:12px;color:#0a0a0a;transform:scaleX(0.9664);">amd64_Microsoft-Windows-GPIOButtons_10.0.20348.1</span></div>
<div class="c" style="left:65.1px;top:533.00px;width:174.4px;height:12px;"><span id="t44" class="t" style="left:0;top:0;font-size:8.5px;line-height:12px;color:#0a0a0a;transform:scaleX(0.9664);">amd64_Microsoft-Windows-HelpAndSupport_10.0.20348.1</span></div>
<div class="c" style="left:65.1px;top:545.00px;width:174.4px;height:12px;"><span id="t45" class="t" style="left:0;top:0;font-size:8.5px;line-height:12px;color:#0a0a0a;transform:scaleX(0.9664);">amd64_Microsoft-Windows-IE-ClientNetworkProtocol_11.0.20348.1</span></div>
<div class="c" style="left:65.1px;top:558.00px;width:174.4px;height:12px;"><span id="t46" class="t" style="left:0;top:0;font-size:8.5px;line-height:12px;color:#0a0a0a;transform:scaleX(0.9664);">amd64_Microsoft-Windows-IE-ESC_11.0.20348.1</span></div>
<div class="c" style="left:65.1px;top:570.00px;width:174.4px;height:12px;"><span id="t47" class="t" style="left:0;top:0;font-size:8.5px;line-height:12px;color:#0a0a0a;transform:scaleX(0.9664);">amd64_Microsoft-Windows-IE-InternetExplorer_11.0.20348.1</span></div>
<div class="c" style="left:65.1px;top:583.00px;width:174.4px;height:12px;"><span id="t48" class="t" style="left:0;top:0;font-size:8.5px;line-height:12px;color:#0a0a0a;transform:scaleX(0.9664);"></span></div>
<span id="t49" class="t b" style="left:538.1px;top:85.00px;font-size:8.5px;line-height:12px;color:#101010;transform:scaleX(1.0417);">Propriétés</span>
<span id="t50" class="t b" style="left:534.9px;top:148.00px;font-size:8.5px;line-height:12px;color:#101010;transform:scaleX(1.0451);">Paramètres</span>
<span id="t51" class="t" style="left:534px;top:98.00px;font-size:8.5px;line-height:12px;color:#757575;transform:scaleX(0.9569);">AppliedConfigurationPass</span>
<span id="t52" class="t" style="left:651px;top:98.00px;font-size:8.5px;line-height:12px;color:#757575;transform:scaleX(0.9495);">7 oobeSystem</span>
<span id="t53" class="t" style="left:534px;top:110.00px;font-size:8.5px;line-height:12px;color:#757575;transform:scaleX(0.9465);">Component</span>
<span id="t54" class="t" style="left:651px;top:110.00px;font-size:8.5px;line-height:12px;color:#757575;transform:scaleX(0.9614);">Microsoft-Windows-Shell-Setup</span>
<span id="t55" class="t" style="left:534px;top:123.00px;font-size:8.5px;line-height:12px;color:#757575;transform:scaleX(0.9510);">KeyName</span>
<span id="t56" class="t" style="left:651px;top:123.00px;font-size:8.5px;line-height:12px;color:#757575;transform:scaleX(0.9202);">Order</span>
<span id="t57" class="t" style="left:534px;top:135.00px;font-size:8.5px;line-height:12px;color:#757575;transform:scaleX(0.9543);">Path</span>
<div class="c" style="left:651px;top:135.00px;width:146.5px;height:12px;"><span id="t58" class="t" style="left:0;top:0;font-size:8.5px;line-height:12px;color:#757575;transform:scaleX(0.9606);">FirstLogonCommands/SynchronousCommand[Order="1"]</span></div>
<span id="t59" class="t" style="left:534px;top:160.00px;font-size:8.5px;line-height:12px;color:#0a0a0a;transform:scaleX(0.9735);">Action</span>
<span id="t60" class="t b" style="left:651px;top:160.00px;font-size:8.5px;line-height:12px;color:#0c0c0c;transform:scaleX(1.0382);">AddListItem</span>
<span id="t61" class="t" style="left:534px;top:172.00px;font-size:8.5px;line-height:12px;color:#0a0a0a;transform:scaleX(0.9406);">CommandLine</span>
<span id="t62" class="t b" style="left:651px;top:172.00px;font-size:8.5px;line-height:12px;color:#0c0c0c;transform:scaleX(1.1074);">cmd.exe /c a:\winrmConfig.bat</span>
<span id="t63" class="t" style="left:534px;top:185.00px;font-size:8.5px;line-height:12px;color:#0a0a0a;transform:scaleX(0.9758);">Description</span>
<span id="t64" class="t b" style="left:651px;top:185.00px;font-size:8.5px;line-height:12px;color:#0c0c0c;transform:scaleX(1.1318);">Activer WinRM (HTTP)</span>
<span id="t65" class="t" style="left:534px;top:197.00px;font-size:8.5px;line-height:12px;color:#0a0a0a;transform:scaleX(0.9202);">Order</span>
<span id="t66" class="t b" style="left:651px;top:197.00px;font-size:8.5px;line-height:12px;color:#0c0c0c;transform:scaleX(0.8871);">1</span>
<span id="t67" class="t" style="left:534px;top:210.00px;font-size:8.5px;line-height:12px;color:#0a0a0a;transform:scaleX(0.9651);">RequiresUserInput</span>
<span id="t68" class="t b" style="left:518.8px;top:421.00px;font-size:8.5px;line-height:12px;color:#101010;transform:scaleX(1.0282);">Action</span>
<span id="t69" class="t" style="left:263px;top:489.00px;font-size:8.5px;line-height:12px;color:#0a0a0a;transform:scaleX(0.9692);">XML (0)</span>
<span id="t70" class="t" style="left:301.3px;top:491.00px;font-size:8.5px;line-height:12px;color:#0a0a0a;transform:scaleX(0.9605);">Validation (0)</span>
<span id="t71" class="t" style="left:358.2px;top:491.00px;font-size:8.5px;line-height:12px;color:#0a0a0a;transform:scaleX(0.9797);">Jeu de configuration (0)</span>
<span id="t72" class="t" style="left:283.8px;top:510.00px;font-size:8.5px;line-height:12px;color:#0a0a0a;transform:scaleX(0.9405);">Description</span>
<span id="t73" class="t" style="left:404.7px;top:510.00px;font-size:8.5px;line-height:12px;color:#0a0a0a;transform:scaleX(0.9467);">Emplacement</span>
<span id="t74" class="t" style="left:283.8px;top:526.00px;font-size:8.5px;line-height:12px;color:#0a0a0a;transform:scaleX(0.9672);">Aucun avertissement ni erreur.</span>
<div style="left:3px;top:586px;width:250px;height:12px;background:#f0f0f0;"></div>
<div style="left:16px;top:592px;width:115px;height:2px;background:#8d8d8d;border-radius:1px;"></div>
</div></body></html>
